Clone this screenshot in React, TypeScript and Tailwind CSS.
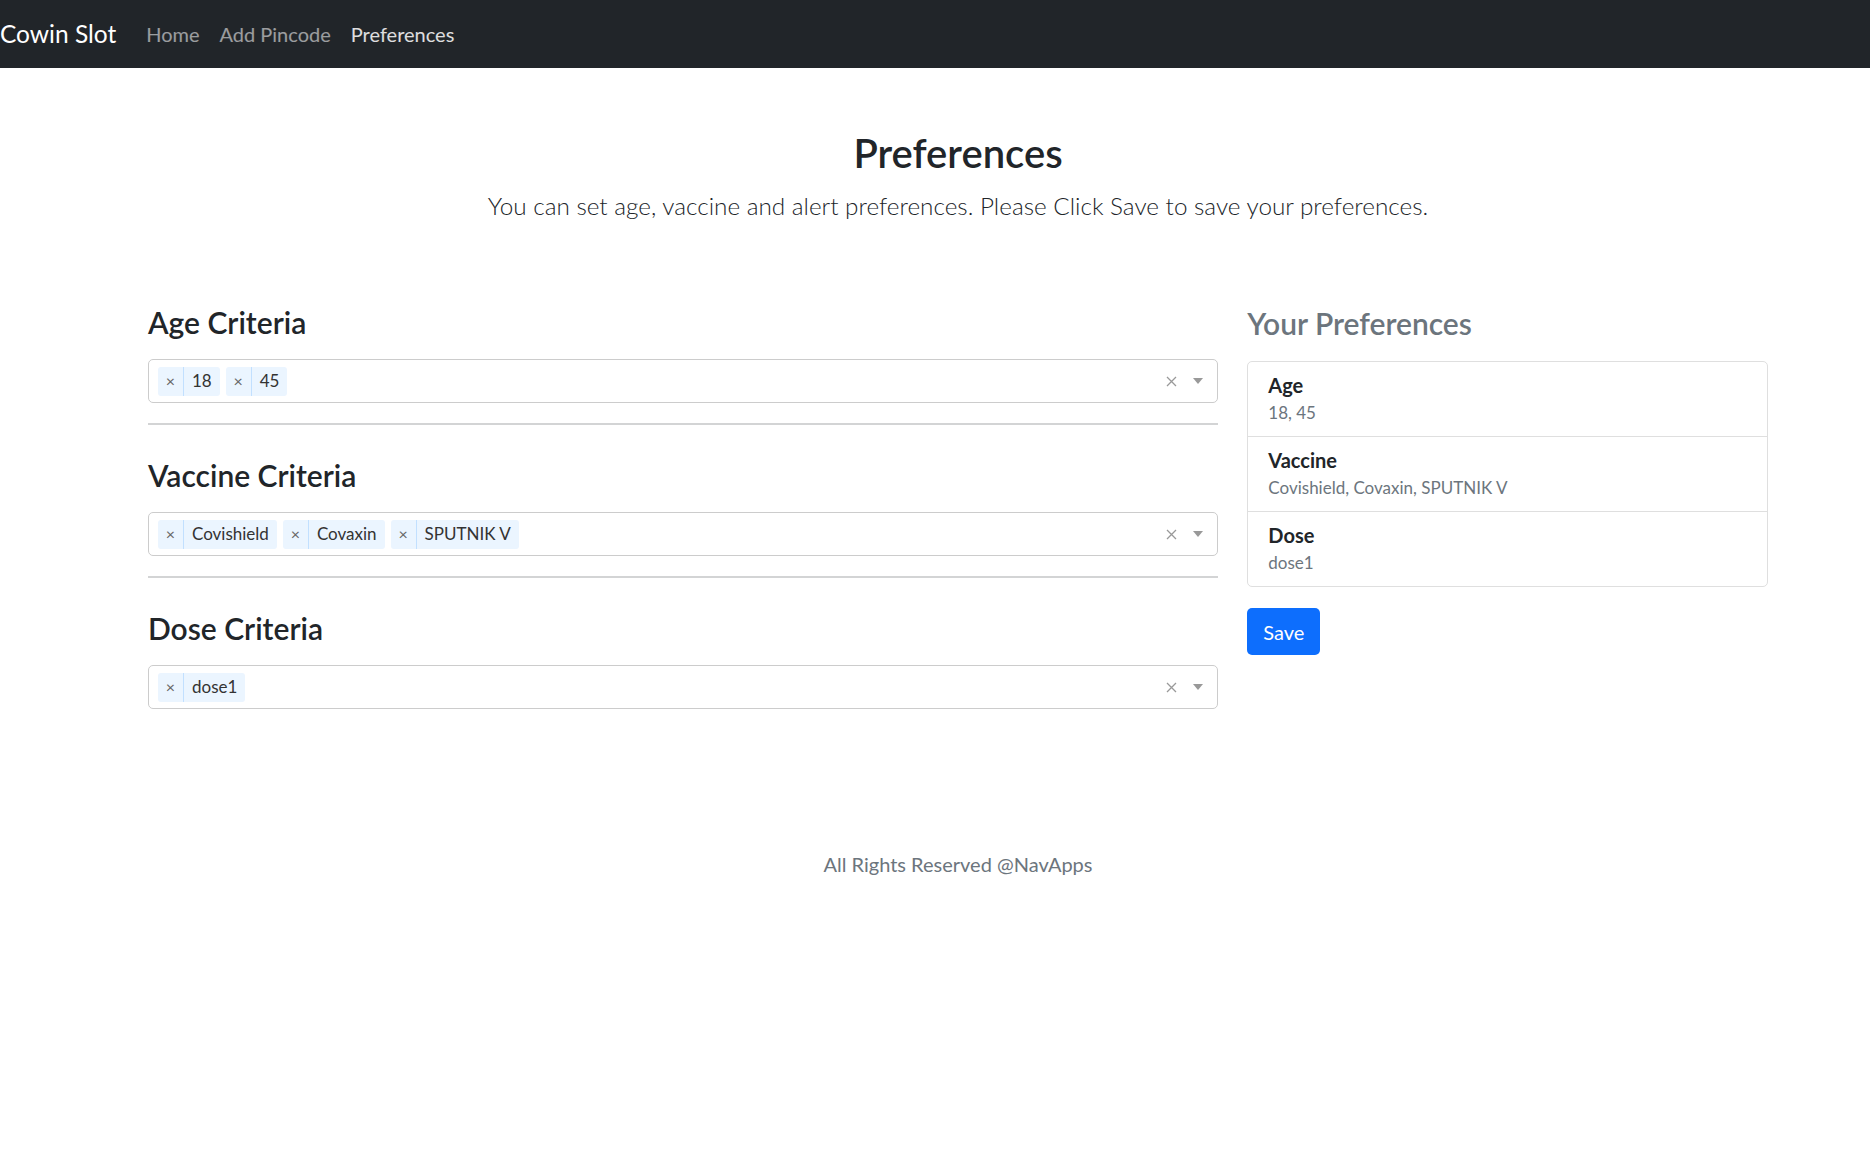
import React from "react";

const sections = [
  { title: "Age Criteria", values: ["18", "45"] },
  { title: "Vaccine Criteria", values: ["Covishield", "Covaxin", "SPUTNIK V"] },
  { title: "Dose Criteria", values: ["dose1"] },
];

const prefs = [
  { label: "Age", value: "18, 45" },
  { label: "Vaccine", value: "Covishield, Covaxin, SPUTNIK V" },
  { label: "Dose", value: "dose1" },
];

function Chip({ text }: { text: string }) {
  return (
    <div className="flex h-[29px] items-stretch rounded-[3px] bg-[#ebf5ff]">
      <span className="flex w-[26px] items-center justify-center border-r border-[#c2e0ff] text-[16px] text-[#666]">
        ×
      </span>
      <span className="flex items-center px-[8px] text-[17px] text-[#333]">{text}</span>
    </div>
  );
}

function MultiSelect({ values }: { values: string[] }) {
  return (
    <div className="flex h-[44px] items-center rounded-[5px] border border-[#cccccc] bg-white pl-[9px] pr-[14px]">
      <div className="flex flex-1 items-center gap-[6px]">
        {values.map((v) => (
          <Chip key={v} text={v} />
        ))}
      </div>
      {/* clear */}
      <svg width="11" height="11" viewBox="0 0 11 11" className="mr-[16px]">
        <path d="M1 1L10 10M10 1L1 10" stroke="#999" strokeWidth="1.3" />
      </svg>
      {/* arrow */}
      <span className="h-0 w-0 border-x-[5.5px] border-t-[6px] border-x-transparent border-t-[#999]" />
    </div>
  );
}

export default function App() {
  return (
    <div className="min-h-[1152px] bg-white font-['Lato','Noto_Sans',sans-serif] text-[#212529]">
      {/* Navbar */}
      <nav className="flex h-[68px] items-center bg-[#212529]">
        <span className="mr-[20px] text-[24.5px] text-white">Cowin Slot</span>
        <a className="px-[10px] text-[20px] text-white/55">Home</a>
        <a className="px-[10px] text-[20px] text-white/55">Add Pincode</a>
        <a className="px-[10px] text-[20px] text-white/85">Preferences</a>
      </nav>

      <main className="ml-[148px] w-[1620px]">
        <h2 className="mt-[61px] text-center text-[40px] font-semibold leading-[48px]">Preferences</h2>
        <p className="mt-[10px] text-center text-[24.3px] font-light leading-[37px]">
          You can set age, vaccine and alert preferences. Please Click Save to save your preferences.
        </p>

        <div className="mt-[80px] flex gap-[29px]">
          {/* Criteria */}
          <div className="w-[1071px]">
            {sections.map((s, i) => (
              <div key={s.title} className={i > 0 ? "mt-[32px]" : ""}>
                <h3 className="text-[30px] font-semibold leading-[36px]">{s.title}</h3>
                <div className="mt-[19px]">
                  <MultiSelect values={s.values} />
                </div>
                {i < sections.length - 1 && <div className="mt-[20px] h-[2px] bg-[#d3d4d5]" />}
              </div>
            ))}
          </div>

          {/* Summary */}
          <div className="w-[521px]">
            <h3 className="mt-px text-[30px] font-semibold leading-[36px] text-[#6c757d]">Your Preferences</h3>
            <div className="mt-[20px] rounded-[5px] border border-[#dfdfdf]">
              {prefs.map((p, i) => (
                <div
                  key={p.label}
                  className={`px-[20px] py-[9px] ${i > 0 ? "border-t border-[#dfdfdf]" : ""}`}
                >
                  <div className="text-[20px] font-bold leading-[28px]">{p.label}</div>
                  <div className="text-[17px] leading-[28px] text-[#6c757d]">{p.value}</div>
                </div>
              ))}
            </div>
            <button className="mt-[21px] h-[47px] w-[73px] rounded-[5px] bg-[#0d6efd] text-[20px] text-white">
              Save
            </button>
          </div>
        </div>

        <footer className="mt-[140px] text-center text-[20px] leading-[30px] text-[#6c757d]">
          All Rights Reserved @NavApps
        </footer>
      </main>
    </div>
  );
}
